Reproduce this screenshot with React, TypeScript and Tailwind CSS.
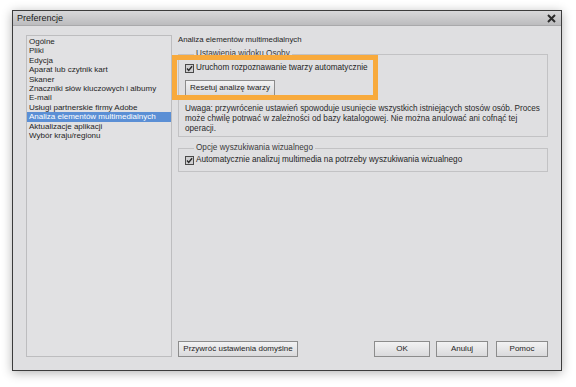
import React from 'react';

const font = { fontFamily: '"Liberation Sans", Arial, sans-serif' };

const listItems = [
  'Ogólne',
  'Pliki',
  'Edycja',
  'Aparat lub czytnik kart',
  'Skaner',
  'Znaczniki słów kluczowych i albumy',
  'E-mail',
  'Usługi partnerskie firmy Adobe',
  'Analiza elementów multimedialnych',
  'Aktualizacje aplikacji',
  'Wybór kraju/regionu'
];

const CheckBox: React.FC = () => (
  <svg width="9" height="9" viewBox="0 0 9 9" className="shrink-0">
    <rect x="0.5" y="0.5" width="8" height="8" fill="#cfcfd1" stroke="#4a4a4a" />
    <path d="M2 4.6 L3.7 6.4 L7.1 2.2" fill="none" stroke="#2a2a2a" strokeWidth="1.4" />
  </svg>
);

const Btn: React.FC<{ label: string; className?: string }> = ({ label, className = '' }) => (
  <div
    className={`h-[16px] flex items-center justify-center border border-[#8c8c8c] bg-gradient-to-b from-[#f2f2f3] to-[#dadadc] text-[8px] text-[#1e1e1e] whitespace-nowrap ${className}`}
  >
    {label}
  </div>
);

const App: React.FC = () => {
  return (
    <div className="w-[576px] h-[387px] bg-white relative overflow-hidden pl-[12px] pt-[10px]" style={font}>
      {/* Dialog window */}
      <div className="w-[550px] h-[361px] border border-[#3c3c3c] bg-[#dfdfe1] flex flex-col shadow-[0_2px_10px_rgba(0,0,0,0.3)]">
        {/* Title bar */}
        <div className="h-[15px] flex items-center justify-between px-[4px] bg-gradient-to-b from-[#d8d8da] to-[#bcbcbe] border-b border-[#a9a9ab]">
          <span className="text-[9px] text-[#1a1a1a] leading-none">Preferencje</span>
          <svg width="9" height="9" viewBox="0 0 9 9" className="mr-[1px]">
            <path d="M1 1 L8 8 M8 1 L1 8" stroke="#2b2b2b" strokeWidth="2" />
          </svg>
        </div>

        {/* Body */}
        <div className="flex flex-1 pl-[13px] pr-[13px] pt-[9px] pb-[12px] gap-[6px]">
          {/* Category list */}
          <div className="w-[146px] h-[322px] border border-[#bdbdbf] bg-[#e1e1e3] pt-[1px]">
            {listItems.map((item, i) => (
              <div
                key={item}
                className={`h-[9.4px] leading-[9.4px] text-[8px] pl-[2px] whitespace-nowrap ${
                  i === 8 ? 'bg-[#5b8fd5] text-white' : 'text-[#1e1e1e]'
                }`}
              >
                {item}
              </div>
            ))}
          </div>

          {/* Settings panel */}
          <div className="w-[370px] h-[322px] flex flex-col justify-between">
            <div className="flex flex-col text-[8.2px] text-[#1e1e1e]">
              <div className="h-[9px] leading-[9px] text-[7.8px]">Analiza elementów multimedialnych</div>

              <fieldset className="mt-[5px] border border-[#c2c2c4] pl-[6px] pr-[4px] pb-[2px]">
                <legend className="ml-[9px] px-[2px] h-[10px] leading-[10px] text-[#3a3a3a]">
                  Ustawienia widoku Osoby
                </legend>
                <div className="mt-[4px] h-[10px] flex items-center gap-[2px]">
                  <CheckBox />
                  <span className="leading-[10px] whitespace-nowrap">Uruchom rozpoznawanie twarzy automatycznie</span>
                </div>
                <Btn label="Resetuj analizę twarzy" className="mt-[7px] w-[90px]" />
                <p className="mt-[8px] leading-[10px] text-[#2a2a2a] whitespace-nowrap">
                  Uwaga: przywrócenie ustawień spowoduje usunięcie wszystkich istniejących stosów osób. Proces
                  <br />
                  może chwilę potrwać w zależności od bazy katalogowej. Nie można anulować ani cofnąć tej
                  <br />
                  operacji.
                </p>
              </fieldset>

              <fieldset className="mt-[6px] border border-[#c2c2c4] pl-[6px] pr-[4px] pb-[6px]">
                <legend className="ml-[9px] px-[2px] h-[10px] leading-[10px] text-[#3a3a3a]">
                  Opcje wyszukiwania wizualnego
                </legend>
                <div className="mt-[2px] h-[10px] flex items-center gap-[2px]">
                  <CheckBox />
                  <span className="leading-[10px] whitespace-nowrap">
                    Automatycznie analizuj multimedia na potrzeby wyszukiwania wizualnego
                  </span>
                </div>
              </fieldset>
            </div>

            {/* Bottom buttons */}
            <div className="flex items-end">
              <Btn label="Przywróć ustawienia domyślne" className="w-[120px]" />
              <div className="flex-1" />
              <Btn label="OK" className="w-[56px]" />
              <Btn label="Anuluj" className="w-[52px] ml-[6px]" />
              <Btn label="Pomoc" className="w-[52px] ml-[8px]" />
            </div>
          </div>
        </div>
      </div>

      {/* Orange annotation highlight */}
      <div className="absolute left-[172px] top-[55px] w-[206px] h-[45px] border-[5px] border-[#f8aa3c]" />
    </div>
  );
};

export default App;
